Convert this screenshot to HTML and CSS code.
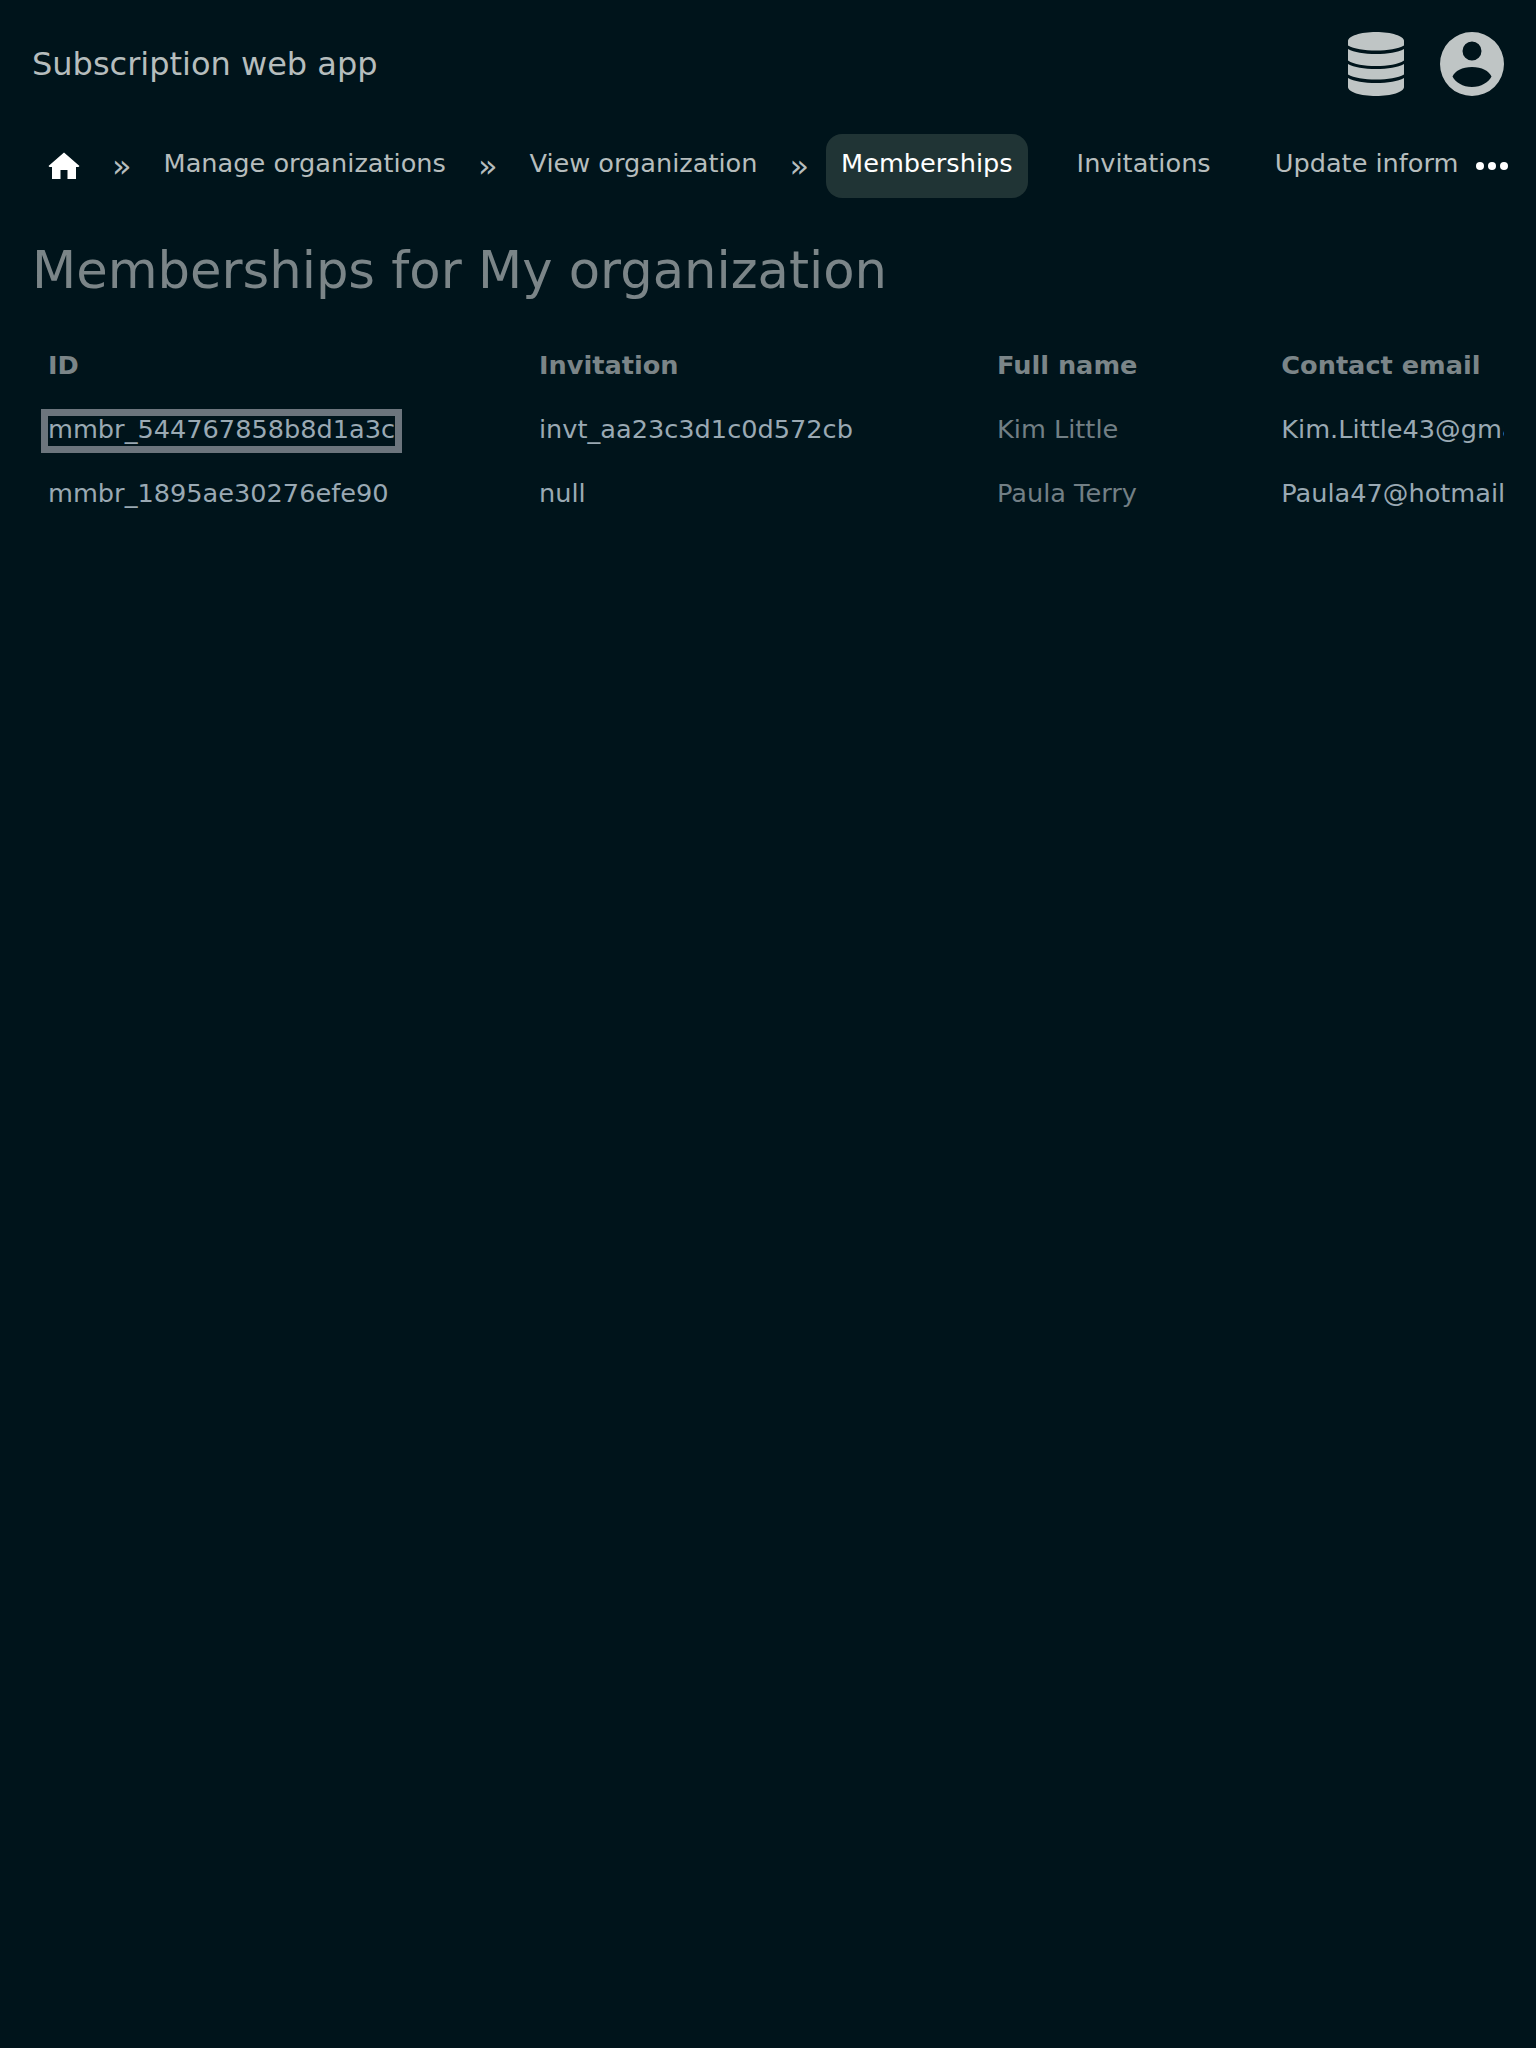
FILE: index.html
```html
<!DOCTYPE html>
<html lang="en">

<head>
    <title>Memberships for My organization</title>
    <link rel="stylesheet" href="styles.css">
</head>

<body>
    <header class="topbar">
        <div class="app-name">Subscription web app</div>
        <div class="topbar-icons">
            <svg class="icon-db" viewBox="0 0 56 64" aria-hidden="true">
                <path d="M56 9v4.500C50 17 40 18.500 28 18.500S6 17 0 13.500V9C0 4 12.500 0 28 0s28 4 28 9z" />
                <path d="M0 17C6 20.500 16 22 28 22S50 20.500 56 17V28.500C50 32.500 40 34 28 34S6 32.500 0 28.500z" />
                <path d="M0 32C6 35.500 16 37 28 37S50 35.500 56 32V42.500C50 46 40 47.500 28 47.500S6 46 0 42.500z" />
                <path d="M0 46C6 49.500 16 51 28 51S50 49.500 56 46V55c0 5-12.500 9-28 9S0 60 0 55z" />
            </svg>
            <svg class="icon-user" viewBox="0 0 64 64" aria-hidden="true">
                <path fill-rule="evenodd" d="M32 0a32 32 0 1 1 0 64a32 32 0 1 1 0-64zM32 9.500a9.500 9.500 0 1 0 0 19a9.500 9.500 0 1 0 0-19zM32 35c-10 0-17 4-19.500 9.500C15 50 23 55 32 55s17-5 19.500-10.500C49 39 42 35 32 35z" />
            </svg>
        </div>
    </header>

    <nav class="tabs">
        <div class="tabs-scroll">
            <a class="tab tab-home" href="#">
                <svg class="icon-home" viewBox="0 0 32 28" aria-hidden="true">
                    <path d="M16 .5L31.500 14L30.500 15H28V27H19.500V18H12.500V27H4V15H1.500L.5 14z" />
                </svg>
            </a>
            <span class="sep">»</span>
            <a class="tab" href="#">Manage organizations</a>
            <span class="sep">»</span>
            <a class="tab" href="#">View organization</a>
            <span class="sep">»</span>
            <a class="tab tab-active" href="#">Memberships</a>
            <a class="tab tab-next" href="#">Invitations</a>
            <a class="tab tab-next" href="#">Update information</a>
        </div>
        <button class="tabs-more" aria-label="More">
            <span class="dot"></span><span class="dot"></span><span class="dot"></span>
        </button>
    </nav>

    <main class="content">
        <h1 class="page-title">Memberships for My organization</h1>
        <div class="table-wrap">
            <table class="members">
                <thead>
                    <tr>
                        <th class="col-id">ID</th>
                        <th class="col-inv">Invitation</th>
                        <th class="col-name">Full name</th>
                        <th class="col-email">Contact email</th>
                    </tr>
                </thead>
                <tbody>
                    <tr>
                        <td><a class="cell-link focused" href="#">mmbr_544767858b8d1a3c</a></td>
                        <td>invt_aa23c3d1c0d572cb</td>
                        <td class="muted">Kim Little</td>
                        <td>Kim.Little43@gmail.com</td>
                    </tr>
                    <tr>
                        <td><a class="cell-link" href="#">mmbr_1895ae30276efe90</a></td>
                        <td>null</td>
                        <td class="muted">Paula Terry</td>
                        <td>Paula47@hotmail.com</td>
                    </tr>
                </tbody>
            </table>
        </div>
    </main>
</body>

</html>
```

FILE: styles.css
```css
html, body {
    margin: 0;
    min-height: 100%;
}

body {
    height: 2048px;
    box-sizing: border-box;
    padding: 32px;
    background-color: #00141b;
    font-family: "DejaVu Sans", sans-serif;
    font-size: 25.6px;
    color: #b6bdbd;
}

a {
    color: inherit;
    text-decoration: none;
}

.topbar {
    display: flex;
    align-items: center;
    justify-content: space-between;
    height: 64px;
}

.app-name {
    font-size: 32px;
    line-height: 62px;
}

.topbar-icons {
    display: flex;
    align-items: center;
    gap: 36px;
}

.icon-db {
    width: 56px;
    height: 64px;
    fill: #bfc5c5;
}

.icon-user {
    width: 64px;
    height: 64px;
    fill: #bfc5c5;
}

.tabs {
    display: flex;
    align-items: center;
    margin-top: 38px;
    height: 64px;
}

.tabs-scroll {
    flex: none;
    display: flex;
    align-items: center;
    width: 1426px;
    overflow: hidden;
    white-space: nowrap;
}

.tab {
    flex: none;
    height: 64px;
    padding: 0 16px;
    line-height: 58px;
    border-radius: 16px;
}

.tab-home {
    display: flex;
    align-items: center;
}

.tab-active {
    margin: 0 .8px;
    padding: 0 15.2px;
    background-color: #203435;
    color: #ffffff;
}

.tab-next {
    margin-left: 32px;
}

.sep {
    flex: none;
    width: 19.6px;
    margin: 0 16px;
    text-align: center;
    font-size: 32px;
    line-height: 64px;
}

.icon-home {
    width: 32px;
    height: 28px;
    fill: #ffffff;
}

.tabs-more {
    flex: none;
    display: flex;
    gap: 4px;
    margin-left: 18px;
    padding: 0;
    border: none;
    background: none;
}

.dot {
    width: 8px;
    height: 8px;
    border-radius: 50%;
    background-color: #ffffff;
}

.content {
    margin-top: 40px;
}

.page-title {
    margin: 0;
    font-size: 51.2px;
    font-weight: normal;
    line-height: 64px;
    color: #7b8588;
}

.table-wrap {
    margin-top: 31px;
    overflow: hidden;
}

.members {
    table-layout: fixed;
    border-collapse: collapse;
    width: 1650px;
}

.members th,
.members td {
    height: 64px;
    padding: 0 16px;
    text-align: left;
    white-space: nowrap;
    color: #9aa9b3;
}

.members th {
    font-weight: bold;
    color: #7b8588;
}

.col-id { width: 459px; }
.col-inv { width: 426px; }
.col-name { width: 252.3px; }

.members .muted {
    color: #727f85;
}

.focused {
    position: relative;
}

/* focus ring sits 2px below the text's own box */
.focused::after {
    content: "";
    position: absolute;
    inset: 2px 0 -2px 0;
    outline: 7px solid #6c757d;
}
```
